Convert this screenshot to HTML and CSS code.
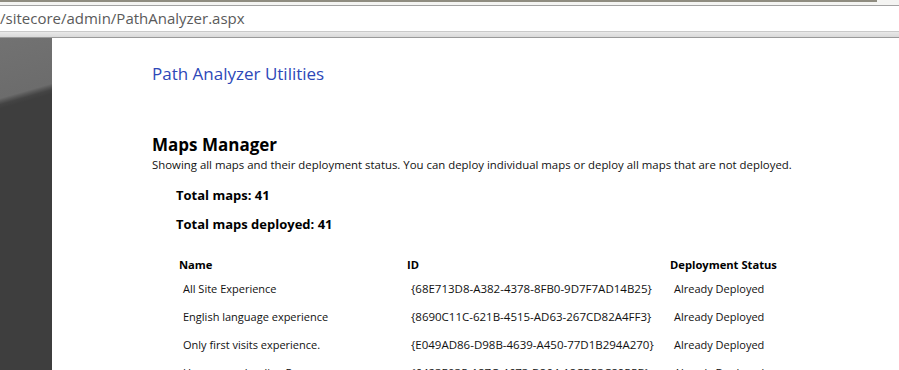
FILE: index.html
```html
<!DOCTYPE html>
<html lang="en">
<head>
<meta charset="UTF-8">
<title>Path Analyzer</title>
<link rel="stylesheet" href="styles.css">
</head>
<body>
<div class="chrome">
    <div class="tabstrip"><div class="tabstrip-fill"></div></div>
    <div class="address">/sitecore/admin/PathAnalyzer.aspx</div>
    <div class="toolbar"></div>
</div>
<div class="page">
    <div class="sidebar"></div>
    <main class="content">
        <div class="util-title">Path Analyzer Utilities</div>

        <h2>Maps Manager</h2>
        <p class="desc">Showing all maps and their deployment status. You can deploy individual maps or deploy all maps that are not deployed.</p>

        <div class="totals">
            <p>Total maps: 41</p>
            <p>Total maps deployed: 41</p>
        </div>

        <table class="maps">
            <thead>
                <tr>
                    <th class="col-name">Name</th>
                    <th class="col-id">ID</th>
                    <th>Deployment Status</th>
                </tr>
            </thead>
            <tbody>
                <tr>
                    <td>All Site Experience</td>
                    <td class="map-id">{68E713D8-A382-4378-8FB0-9D7F7AD14B25}</td>
                    <td>Already Deployed</td>
                </tr>
                <tr>
                    <td>English language experience</td>
                    <td class="map-id">{8690C11C-621B-4515-AD63-267CD82A4FF3}</td>
                    <td>Already Deployed</td>
                </tr>
                <tr>
                    <td>Only first visits experience.</td>
                    <td class="map-id">{E049AD86-D98B-4639-A450-77D1B294A270}</td>
                    <td>Already Deployed</td>
                </tr>
                <tr>
                    <td>Home page landing Page</td>
                    <td class="map-id">{6423E035-187C-4673-B864-18CB53C8955B}</td>
                    <td>Already Deployed</td>
                </tr>
            </tbody>
        </table>
    </main>
</div>
</body>
</html>
```

FILE: styles.css
```css
html, body {
    margin: 0;
    padding: 0;
    background: #fff;
    font-family: "Open Sans", "Noto Sans", sans-serif;
    color: #111;
}

/* browser chrome */
.chrome {
    background: #fff;
}
.tabstrip {
    height: 5px;
    background: #f4f4f2;
    border-bottom: 1px solid #a3a3a3;
}
.tabstrip-fill {
    width: 877px;
    height: 2px;
    background: #8f8c80;
}
.address {
    height: 25px;
    line-height: 24px;
    font-size: 15px;
    color: #5a5a5a;
    white-space: nowrap;
}
.toolbar {
    height: 5px;
    border-top: 1px solid #c9c9c9;
    border-bottom: 1px solid #9a9a9a;
    background: linear-gradient(#e9e9e9, #d9d9d9);
}

/* page */
.page {
    display: flex;
    min-height: calc(100vh - 38px);
}
.sidebar {
    width: 52px;
    flex-shrink: 0;
    background-color: #3e3e3e;
    background-image: linear-gradient(164deg, #727272 0, #6c6c6c 58px, #575757 61px, #444 64px, #3e3e3e 68px);
    background-size: 52px 333px;
    background-repeat: no-repeat;
}
.content {
    padding: 25px 0 0 100px;
    flex: 1;
}
.util-title {
    font-size: 17px;
    color: #2d48b8;
    line-height: 22px;
}
h2 {
    margin: 48px 0 0;
    font-size: 17px;
    font-weight: bold;
    line-height: 24px;
    color: #000;
}
.desc {
    margin: 0;
    font-size: 11.4px;
    line-height: 16px;
}
.totals {
    padding-left: 24px;
    margin-top: 14px;
}
.totals p {
    margin: 0 0 13px;
    font-size: 13px;
    font-weight: bold;
    line-height: 16px;
    color: #000;
}
.maps {
    margin: 22px 0 0 24px;
    border-collapse: collapse;
    font-size: 11px;
}
.maps th {
    text-align: left;
    font-size: 11.2px;
    font-weight: bold;
    padding: 0 3px;
    height: 20px;
    color: #000;
}
.maps td {
    padding: 0 7px;
    height: 28px;
}
.maps td.map-id {
    font-size: 11.5px;
}
.col-name {
    width: 222px;
}
.col-id {
    width: 257px;
}
```
